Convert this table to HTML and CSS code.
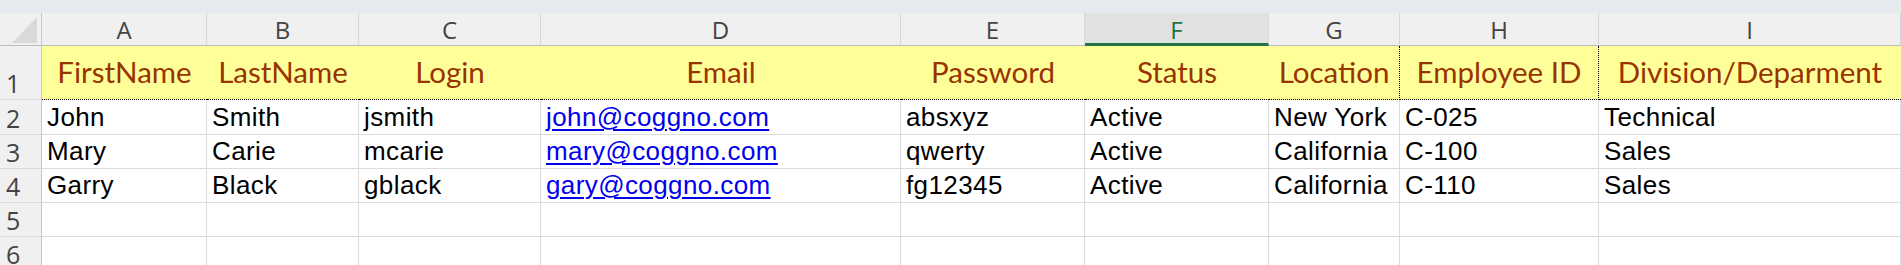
FILE: index.html
```html
<!DOCTYPE html>
<html lang="en">
<head>
<meta charset="utf-8">
<title>Users</title>
<link rel="stylesheet" href="styles.css">
</head>
<body>
<div class="topbar"></div>
<div class="sheet">
  <!-- column headers -->
  <div class="corner">
    <svg class="corner-mark" width="26" height="27" viewBox="0 0 26 27"><polygon points="0,26 25,0 25,26" fill="#d9d9d9"/></svg>
  </div>
  <div class="colhead">A</div>
  <div class="colhead">B</div>
  <div class="colhead">C</div>
  <div class="colhead">D</div>
  <div class="colhead">E</div>
  <div class="colhead selected">F</div>
  <div class="colhead">G</div>
  <div class="colhead">H</div>
  <div class="colhead">I</div>

  <!-- row 1: titles -->
  <div class="rownum">1</div>
  <div class="title">FirstName</div>
  <div class="title">LastName</div>
  <div class="title">Login</div>
  <div class="title">Email</div>
  <div class="title">Password</div>
  <div class="title">Status</div>
  <div class="title pagebreak">Location</div>
  <div class="title pagebreak">Employee ID</div>
  <div class="title">Division/Deparment</div>

  <!-- row 2 -->
  <div class="rownum">2</div>
  <div class="cell">John</div>
  <div class="cell">Smith</div>
  <div class="cell">jsmith</div>
  <div class="cell"><a class="link" href="#">john@coggno.com</a></div>
  <div class="cell">absxyz</div>
  <div class="cell">Active</div>
  <div class="cell">New York</div>
  <div class="cell">C-025</div>
  <div class="cell">Technical</div>

  <!-- row 3 -->
  <div class="rownum">3</div>
  <div class="cell">Mary</div>
  <div class="cell">Carie</div>
  <div class="cell">mcarie</div>
  <div class="cell"><a class="link" href="#">mary@coggno.com</a></div>
  <div class="cell">qwerty</div>
  <div class="cell">Active</div>
  <div class="cell">California</div>
  <div class="cell">C-100</div>
  <div class="cell">Sales</div>

  <!-- row 4 -->
  <div class="rownum">4</div>
  <div class="cell">Garry</div>
  <div class="cell">Black</div>
  <div class="cell">gblack</div>
  <div class="cell"><a class="link" href="#">gary@coggno.com</a></div>
  <div class="cell">fg12345</div>
  <div class="cell">Active</div>
  <div class="cell">California</div>
  <div class="cell">C-110</div>
  <div class="cell">Sales</div>

  <!-- row 5 -->
  <div class="rownum">5</div>
  <div class="cell"></div><div class="cell"></div><div class="cell"></div>
  <div class="cell"></div><div class="cell"></div><div class="cell"></div>
  <div class="cell"></div><div class="cell"></div><div class="cell"></div>

  <!-- row 6, partly scrolled out of view -->
  <div class="rownum">6</div>
  <div class="cell"></div><div class="cell"></div><div class="cell"></div>
  <div class="cell"></div><div class="cell"></div><div class="cell"></div>
  <div class="cell"></div><div class="cell"></div><div class="cell"></div>
</div>
</body>
</html>
```

FILE: styles.css
```css
html, body {
  margin: 0;
  padding: 0;
  background: #ffffff;
  overflow: hidden;
}

.topbar {
  height: 13px;
  background: #e6e9ed;
}

.sheet {
  display: grid;
  grid-template-columns: 42px 165px 152px 182px 360px 184px 184px 131px 199px 1fr;
  grid-template-rows: 33px 54px 35px 34px 34px 34px 34px;
}

.sheet > div {
  box-sizing: border-box;
  overflow: hidden;
  white-space: nowrap;
}

/* column letters */
.corner {
  background: #f0f0f0;
  border-right: 1px solid #c8c8c8;
  border-bottom: 1px solid #bdbdbd;
  position: relative;
}
.corner-mark {
  position: absolute;
  left: 12px;
  top: 4px;
}

.colhead {
  background: #f0f0f0;
  border-right: 1px solid #d6d6d6;
  border-bottom: 1px solid #bdbdbd;
  font-family: "Open Sans", "Noto Sans", sans-serif;
  font-size: 24px;
  color: #444444;
  text-align: center;
  padding-top: 1px;
  line-height: 31px;
}
.colhead.selected {
  background: #e1e1e1;
  color: #217346;
  border-bottom: 3px solid #217346;
}

/* row numbers */
.rownum {
  background: #f0f0f0;
  border-right: 1px solid #c8c8c8;
  border-bottom: 1px solid #dadada;
  font-family: "Open Sans", "Noto Sans", sans-serif;
  font-size: 25px;
  color: #444444;
  padding-left: 6px;
  display: flex;
  align-items: flex-end;
  line-height: 32px;
}

/* title row */
.title {
  background: #ffff99;
  border-bottom: 1px dotted #000000;
  font-family: Lato, "Open Sans", sans-serif;
  font-size: 29.5px;
  color: #993300;
  text-align: center;
  line-height: 52px;
}
.title.pagebreak {
  border-right: 1px dotted #000000;
}

/* data cells */
.cell {
  border-right: 1px solid #dcdcdc;
  border-bottom: 1px solid #dcdcdc;
  font-family: "Liberation Sans", Arial, sans-serif;
  font-size: 26px;
  letter-spacing: 0.4px;
  color: #000000;
  padding-left: 5px;
  display: flex;
  align-items: flex-end;
  line-height: 33px;
}

.link {
  color: #0000ee;
  text-decoration: underline;
  text-decoration-thickness: 2px;
  text-underline-offset: 3px;
}
```
